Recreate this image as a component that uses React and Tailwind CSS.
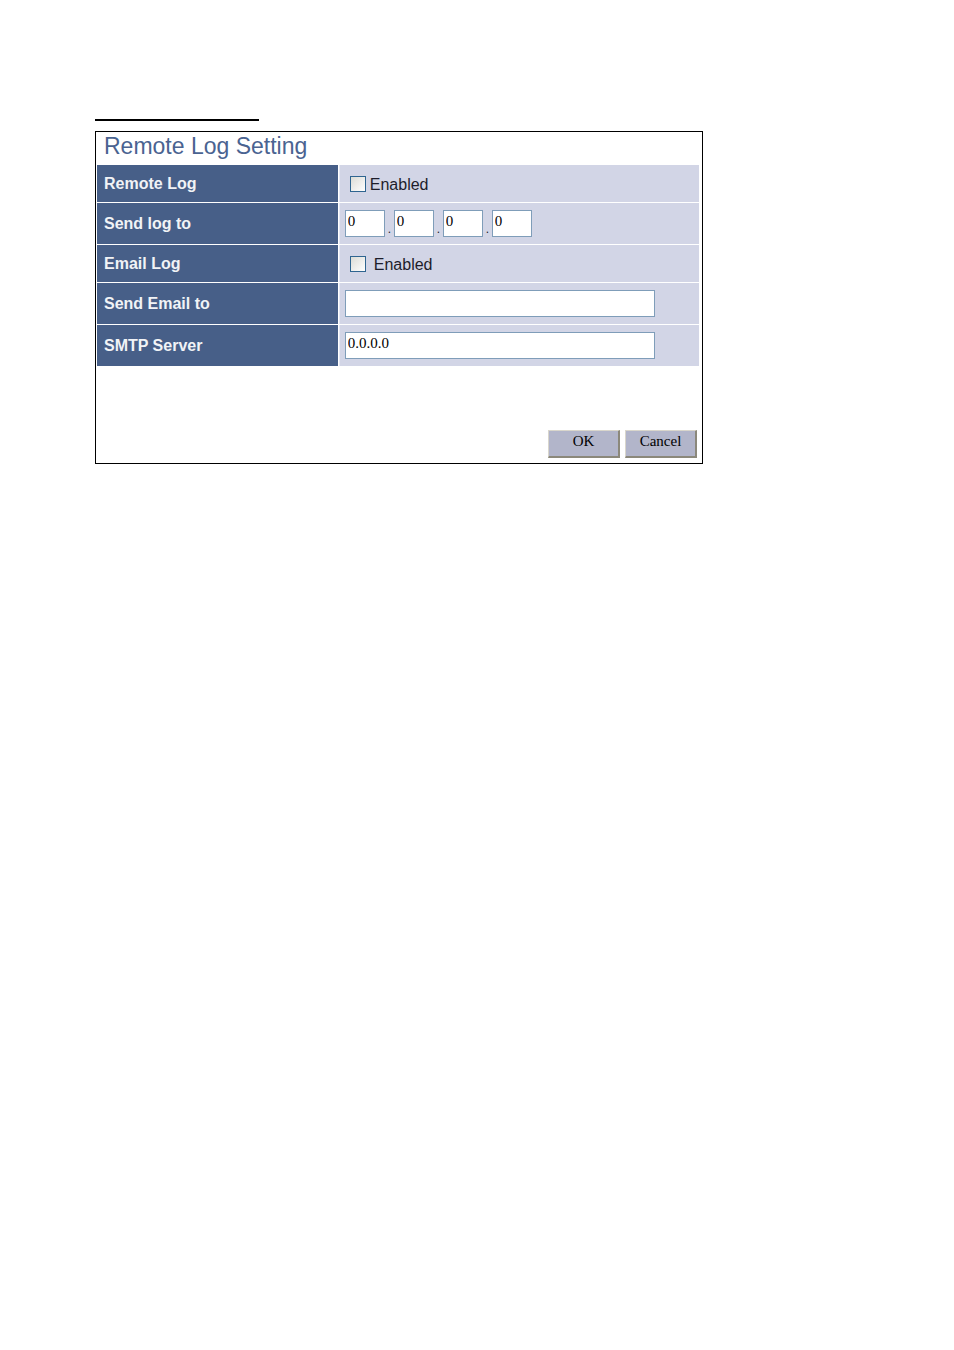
import React from "react";

const checkbox =
  "size-4 shrink-0 appearance-none border border-[#2f6590] bg-linear-to-br from-[#dcdcd6] to-white outline-none checked:bg-[#3d769f] focus-visible:ring-2";
const field =
  "h-[27px] border border-[#7f9db9] bg-white px-0.5 pb-1 font-['Liberation_Serif',serif] text-[15px] leading-5 text-black";
const button =
  "h-7 w-[72px] border-t border-l border-r-2 border-b-2 border-t-[#d9d6cc] border-l-[#d9d6cc] border-r-[#8b887b] border-b-[#8b887b] bg-[#b2b5ca] pb-1.5 font-['Liberation_Serif',serif] text-[15px] leading-5 text-black";

function Row({ label, htmlFor, tall, children }) {
  return (
    <div className={`flex gap-px ${tall ? "min-h-[41px]" : "min-h-[37px]"}`}>
      <div className="flex w-2/5 shrink-0 items-center bg-[#475f88] px-[7px] font-bold text-[#f1f3f6]">
        <label htmlFor={htmlFor}>{label}</label>
      </div>
      <div className="flex min-w-0 flex-1 items-center border-l border-[#e6e8f4] bg-[#d2d5e6] pl-[5px]">
        {children}
      </div>
    </div>
  );
}

export default function App() {
  return (
    <main className="px-[95px] pt-[119px] font-['Liberation_Sans',sans-serif] text-base leading-5 text-[#1d1d2b]">
      <hr className="w-[164px] border-t-2 border-black" />
      <form
        className="mt-2.5 max-w-[608px] border border-black bg-white pb-[5px]"
        onSubmit={(e) => e.preventDefault()}
      >
        <h1 className="px-2 pb-[5px] text-[23px] leading-7 text-[#4a6391]">
          Remote Log Setting
        </h1>
        <div className="mr-[3px] ml-px flex flex-col gap-px">
          <Row label="Remote Log" htmlFor="remote-log">
            <div className="flex items-center gap-1 pl-[5px]">
              <input id="remote-log" type="checkbox" className={checkbox} />
              <label htmlFor="remote-log" className="pt-0.5">Enabled</label>
            </div>
          </Row>
          <Row label="Send log to" htmlFor="ip-1" tall>
            <div className="flex items-end">
              {[1, 2, 3, 4].map((n) => (
                <React.Fragment key={n}>
                  {n > 1 && <span className="w-[9px] pb-0.5 text-center text-xs leading-3">.</span>}
                  <input
                    id={`ip-${n}`}
                    aria-label={`Send log to, part ${n}`}
                    type="text"
                    defaultValue="0"
                    className={`w-10 ${field}`}
                  />
                </React.Fragment>
              ))}
            </div>
          </Row>
          <Row label="Email Log" htmlFor="email-log">
            <div className="flex items-center gap-2 pl-[5px]">
              <input id="email-log" type="checkbox" className={checkbox} />
              <label htmlFor="email-log" className="pt-0.5">Enabled</label>
            </div>
          </Row>
          <Row label="Send Email to" htmlFor="send-email" tall>
            <input id="send-email" type="text" className={`w-[310px] ${field}`} />
          </Row>
          <Row label="SMTP Server" htmlFor="smtp" tall>
            <input id="smtp" type="text" defaultValue="0.0.0.0" className={`w-[310px] ${field}`} />
          </Row>
        </div>
        <div className="mt-16 flex justify-end gap-[5px] pr-[5px]">
          <button type="submit" className={button}>OK</button>
          <button type="button" className={button}>Cancel</button>
        </div>
      </form>
    </main>
  );
}
